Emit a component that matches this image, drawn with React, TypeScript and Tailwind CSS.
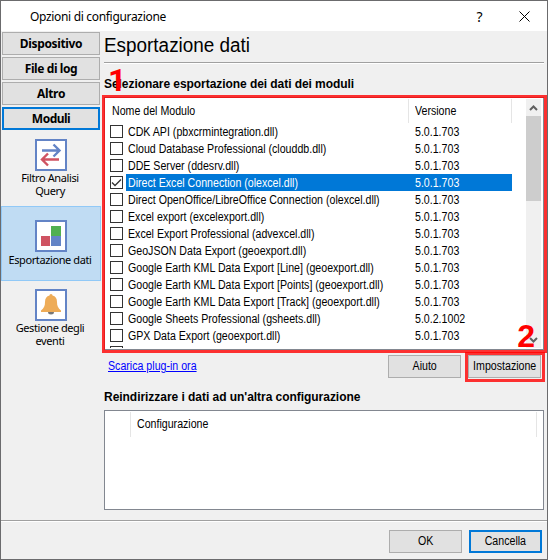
import { useState } from 'react';
import { clsx } from 'clsx';

const sections = [
  { label: 'Dispositivo', tracking: 'tracking-[-0.35px]' },
  { label: 'File di log', tracking: 'tracking-[-0.4px]' },
  { label: 'Altro', tracking: 'tracking-[-0.3px]' },
  { label: 'Moduli', tracking: 'tracking-[-0.5px]' },
];

const modules = [
  { name: 'CDK API (pbxcrmintegration.dll)', version: '5.0.1.703' },
  { name: 'Cloud Database Professional (clouddb.dll)', version: '5.0.1.703' },
  { name: 'DDE Server (ddesrv.dll)', version: '5.0.1.703' },
  { name: 'Direct Excel Connection (olexcel.dll)', version: '5.0.1.703' },
  { name: 'Direct OpenOffice/LibreOffice Connection (olexcel.dll)', version: '5.0.1.703' },
  { name: 'Excel export (excelexport.dll)', version: '5.0.1.703' },
  { name: 'Excel Export Professional (advexcel.dll)', version: '5.0.1.703' },
  { name: 'GeoJSON Data Export (geoexport.dll)', version: '5.0.1.703' },
  { name: 'Google Earth KML Data Export [Line] (geoexport.dll)', version: '5.0.1.703' },
  { name: 'Google Earth KML Data Export [Points] (geoexport.dll)', version: '5.0.1.703' },
  { name: 'Google Earth KML Data Export [Track] (geoexport.dll)', version: '5.0.1.703' },
  { name: 'Google Sheets Professional (gsheets.dll)', version: '5.0.2.1002' },
  { name: 'GPX Data Export (geoexport.dll)', version: '5.0.1.703' },
  { name: '', version: '' },
];

export default function App() {
  const [section, setSection] = useState('Moduli');
  const [selected, setSelected] = useState(3);

  return (
    <div className="flex h-[560px] w-[548px] flex-col overflow-hidden border border-[#6b6b6d] bg-[#f0f0f0] font-['Liberation_Sans',sans-serif] text-[12px] leading-[17px] text-black">
      <header className="flex h-[30px] shrink-0 items-center bg-white font-['Noto_Sans',sans-serif]">
        <h1 className="flex-1 pl-[29px] text-[12px] tracking-[-0.32px]">Opzioni di configurazione</h1>
        <button className="w-[45px] text-center text-[14px]">?</button>
        <button className="grid w-[45px] place-items-center" aria-label="Chiudi">
          <svg width="11" height="11" viewBox="0 0 11 11" fill="none" stroke="#000">
            <path d="M.5.5l10 10M10.5.5l-10 10" />
          </svg>
        </button>
      </header>

      <div className="flex h-[489px] shrink-0">
        <nav className="flex w-[101px] shrink-0 flex-col font-['Noto_Sans',sans-serif]">
          <div className="flex flex-col gap-[2px] py-px pl-px">
            {sections.map((s) => (
              <button
                key={s.label}
                onClick={() => setSection(s.label)}
                className={clsx(
                  'flex h-[23px] w-[98px] items-center justify-center bg-[#e1e1e1] text-[12px] font-bold',
                  s.tracking,
                  section === s.label ? 'border-2 border-[#0078d7]' : 'border border-[#adadad]',
                )}
              >
                {s.label}
              </button>
            ))}
          </div>
          <SideItem lines={['Filtro Analisi', 'Query']}>
            <g fill="none" strokeWidth="2.4">
              <path stroke="#6384c6" d="M7 11.500h17M18.500 5.500l6 6-6 6" />
              <path stroke="#cf5362" d="M24 20.500H7.500M13 14.500l-6 6 6 6" />
            </g>
          </SideItem>
          <SideItem lines={['Esportazione dati']} active>
            <path fill="#50b050" d="M16 6h10v10H16z" />
            <path fill="#cf5362" d="M6 16h9v10H6z" />
            <path fill="#6384c6" d="M16 16h10v10H16z" />
          </SideItem>
          <SideItem lines={['Gestione degli', 'eventi']}>
            <path fill="#777" d="M13 23h6a3 2.500 0 0 1-6 0z" />
            <path fill="#eeac57" d="M16 5c1 0 1.500.8 1.500 1.500C20.500 7.300 22 9.500 22 13c0 4 1 6 4 8.500V23H6v-1.500c3-2.500 4-4.500 4-8.500 0-3.500 1.500-5.700 4.500-6.500C14.500 5.800 15 5 16 5z" />
          </SideItem>
        </nav>

        <main className="flex flex-1 flex-col pl-[2px]">
          <h2 className="h-[31px] shrink-0 origin-left scale-x-[0.945] text-[20px] leading-[29px]">Esportazione dati</h2>
          <div className="mr-[3px] h-[2px] shrink-0 border-b border-b-white bg-[#a0a0a0]" />
          <div className="relative h-[33px] shrink-0">
            <h3 className="pt-[12px] text-[12px] font-bold tracking-[-0.06px]">Selezionare esportazione dei dati dei moduli</h3>
            <Mark className="top-0 left-[4px] font-['Roboto',sans-serif]">1</Mark>
          </div>

          <div className="relative h-[253px] w-[440px] shrink-0 border border-[#828790] bg-white p-px">
            <div className="flex h-full">
              <div className="w-[420px] overflow-hidden">
                <div className="flex h-[24px] items-center pl-[6px]">
                  <span className="w-[296px]"><Narrow>Nome del Modulo</Narrow></span>
                  <span className="flex h-full w-[104px] items-center border-x border-[#e5e5e5] pl-[6px]"><Narrow>Versione</Narrow></span>
                </div>
                {modules.map((m, i) => (
                  <div key={i} className="flex h-[17px] pl-[4px]" onClick={() => setSelected(i)}>
                    <span className="mt-[2px] grid h-[13px] w-[13px] shrink-0 place-items-center border border-[#333] bg-white">
                      {i === 3 && (
                        <svg width="11" height="11" viewBox="0 0 11 11" fill="none" stroke="#333" strokeWidth="1.3">
                          <path d="M1 5.500l3 3 6-6" />
                        </svg>
                      )}
                    </span>
                    <span className={clsx('ml-[3px] flex w-[386px] pt-px pl-[2px]', i === selected && 'bg-[#0078d7] text-white')}>
                      <span className="w-[287px]"><Narrow>{m.name}</Narrow></span>
                      <Narrow>{m.version}</Narrow>
                    </span>
                  </div>
                ))}
              </div>
              <div className="flex w-[15px] flex-col items-center bg-[#f0f0f0]">
                <Chevron d="M1 6l3.500-3.500L8 6" />
                <div className="h-[85px] w-full bg-[#cdcdcd]" />
                <div className="flex-1" />
                <Chevron d="M1 2l3.500 3.500L8 2" />
              </div>
            </div>
            <div className="pointer-events-none absolute -top-[3px] -right-[4px] -bottom-[4px] -left-[3px] border-3 border-[#ff0000cc]" />
            <Mark className="right-[8px] bottom-[-3px]">2</Mark>
          </div>

          <div className="flex h-[35px] shrink-0 pt-[5px] pr-[6px]">
            <a href="#" className="mt-[3px] ml-[4px] flex-1 text-[#0000ff]">
              <Narrow className="underline">Scarica plug-in ora</Narrow>
            </a>
            <PushButton>Aiuto</PushButton>
            <div className="relative ml-[7px] h-[23px]">
              <PushButton>Impostazione</PushButton>
              <div className="pointer-events-none absolute -top-[3px] -right-[4px] -bottom-[4px] -left-[3px] border-3 border-[#ff0000cc]" />
            </div>
          </div>
          <h3 className="mt-[4px] h-[21px] shrink-0 text-[12px] font-bold tracking-[-0.04px]">
            Reindirizzare i dati ad un'altra configurazione
          </h3>
          <div className="h-[100px] w-[440px] shrink-0 border border-[#828790] bg-white p-px">
            <div className="flex h-[25px] items-center">
              <span className="h-full w-[25px] border-r border-[#e5e5e5]" />
              <span className="flex h-full w-[406px] items-center border-r border-[#e5e5e5] pl-[6px]"><Narrow>Configurazione</Narrow></span>
            </div>
          </div>
        </main>
      </div>

      <footer className="flex-1 border-t border-[#a0a0a0]">
        <div className="flex justify-end gap-[7px] border-t border-white pt-[8px] pr-[5px]">
          <PushButton>OK</PushButton>
          <PushButton primary>Cancella</PushButton>
        </div>
      </footer>
    </div>
  );
}

function Narrow({ children, className }: { children: React.ReactNode; className?: string }) {
  return <span className={clsx('inline-block origin-left scale-x-[0.885] whitespace-nowrap', className)}>{children}</span>;
}

function SideItem({ lines, active, children }: { lines: string[]; active?: boolean; children: React.ReactNode }) {
  return (
    <a
      className={clsx(
        'flex h-[75px] w-[100px] flex-col items-center text-center text-[11px] leading-[13px] tracking-[-0.4px]',
        active ? 'border border-[#91c9f7] bg-[#c0dcf3] pt-[13px]' : 'pt-[8px]',
      )}
    >
      <svg width="32" height="32" viewBox="0 0 32 32" className={clsx('shrink-0', active && 'mb-px')}>
        <path fill="#fff" stroke="#6384c6" strokeWidth="2" d="M1 1h30v30H1z" />
        {children}
      </svg>
      {lines.map((l) => (
        <span key={l} className="mr-[2px] whitespace-nowrap">{l}</span>
      ))}
    </a>
  );
}

function PushButton({ children, primary }: { children: React.ReactNode; primary?: boolean }) {
  return (
    <button
      className={clsx(
        'flex h-[23px] w-[73px] items-center justify-center bg-[#e1e1e1]',
        primary ? 'border-2 border-[#0078d7]' : 'border border-[#adadad]',
      )}
    >
      <span className="scale-x-[0.885]">{children}</span>
    </button>
  );
}

function Chevron({ d }: { d: string }) {
  return (
    <div className="grid h-[17px] w-full shrink-0 place-items-center">
      <svg width="9" height="8" viewBox="0 0 9 8" fill="none" stroke="#606060" strokeWidth="2">
        <path d={d} />
      </svg>
    </div>
  );
}

function Mark({ children, className }: { children: string; className: string }) {
  return <span className={clsx('absolute text-[32px] leading-[32px] font-bold text-[#ff0000]', className)}>{children}</span>;
}
